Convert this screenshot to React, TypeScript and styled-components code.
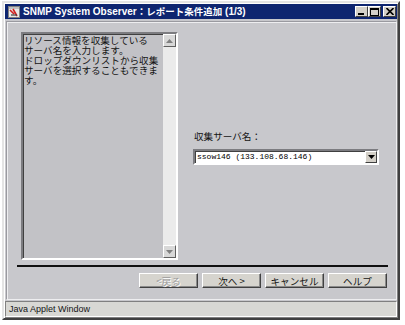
import React from "react";
import styled, { createGlobalStyle } from "styled-components";

const Global = createGlobalStyle`
  html, body { margin: 0; padding: 0; background: #ffffff; }
  body { font-family: "Noto Sans CJK JP", "Liberation Sans", sans-serif; }
  * { box-sizing: border-box; }
`;

const Root = styled.div`
  padding: 1px 0 0 2px;
`;

const Window = styled.div`
  width: 398px;
  height: 319px;
  background: #c8c8cc;
  border: 2px solid;
  border-color: #e4e4e4 #404040 #404040 #e4e4e4;
  box-shadow: inset 1px 1px 0 #ffffff, inset -1px -1px 0 #808080;
  padding: 1px;
  display: flex;
  flex-direction: column;
`;

const TitleBar = styled.div`
  height: 15px;
  background: #0e2570;
  display: flex;
  align-items: center;
  padding: 0 1px 0 3px;
`;

const Title = styled.div`
  flex: 1;
  color: #ffffff;
  font-family: "Liberation Sans", "Noto Sans CJK JP", sans-serif;
  font-weight: bold;
  font-size: 10px;
  line-height: 15px;
  margin-left: 3px;
  white-space: nowrap;
`;

const TitleJp = styled.span`
  font-family: "Noto Sans CJK JP", sans-serif;
  font-size: 9.5px;
`;

const Controls = styled.div`
  display: flex;
  align-items: center;
`;

const CtlButton = styled.div<{ $gap?: boolean }>`
  width: 13px;
  height: 11px;
  margin-left: ${(p) => (p.$gap ? "2px" : "0")};
  background: #d4d0c8;
  border: 1px solid;
  border-color: #ffffff #404040 #404040 #ffffff;
  display: flex;
  align-items: center;
  justify-content: center;
`;

const Panel = styled.div`
  flex: 1;
  margin: 3px 0 0 2px;
  border: 1px solid #eeeef0;
  box-shadow: -1px -1px 0 #9a9aa0;
  padding: 9px 8px 0 9px;
  display: flex;
  flex-direction: column;
`;

const Body = styled.div`
  display: flex;
  padding-left: 4px;
`;

const TextArea = styled.div`
  width: 157px;
  height: 228px;
  border: 2px solid;
  border-color: #7c7c80 #ffffff #ffffff #7c7c80;
  box-shadow: inset 1px 1px 0 #404040;
  background: #c2c2c6;
  display: flex;
`;

const Message = styled.div`
  flex: 1;
  padding: 1px 0 0 1px;
  font-size: 9.6px;
  line-height: 10px;
  color: #141414;
  white-space: pre-line;
`;

const ScrollBar = styled.div`
  width: 13px;
  background: #ebebeb;
  display: flex;
  flex-direction: column;
  justify-content: space-between;
`;

const ArrowButton = styled.div`
  width: 13px;
  height: 13px;
  background: #d8d8d8;
  border: 1px solid;
  border-color: #ffffff #606060 #606060 #ffffff;
  display: flex;
  align-items: center;
  justify-content: center;
`;

const FormColumn = styled.div`
  margin-left: 15px;
  width: 186px;
  align-self: center;
  display: flex;
  flex-direction: column;
  padding-top: 2px;
`;

const Label = styled.div`
  font-size: 9.6px;
  line-height: 12px;
  color: #141414;
  margin-left: 1px;
`;

const Combo = styled.div`
  margin-top: 7px;
  height: 16px;
  background: #ffffff;
  border: 2px solid;
  border-color: #7c7c80 #ffffff #ffffff #7c7c80;
  box-shadow: inset 1px 1px 0 #404040;
  display: flex;
  align-items: center;
`;

const ComboText = styled.div`
  flex: 1;
  padding-left: 2px;
  font-family: "Liberation Mono", monospace;
  font-size: 8px;
  color: #000000;
  white-space: nowrap;
`;

const DropButton = styled.div`
  width: 12px;
  height: 12px;
  background: #d4d0c8;
  border: 1px solid;
  border-color: #ffffff #404040 #404040 #ffffff;
  display: flex;
  align-items: center;
  justify-content: center;
`;

const Separator = styled.div`
  margin-top: 5px;
  height: 2px;
  background: #101010;
`;

const ButtonRow = styled.div`
  margin-top: 6px;
  display: flex;
  justify-content: flex-end;
  gap: 4px;
  padding-right: 1px;
`;

const Button = styled.div<{ $disabled?: boolean }>`
  width: 59px;
  height: 15px;
  background: #d6d4ce;
  border: 1px solid;
  border-color: #ffffff #404040 #404040 #ffffff;
  box-shadow: inset -1px -1px 0 #8a8a8a;
  display: flex;
  align-items: center;
  justify-content: center;
  font-size: 9.6px;
  color: ${(p) => (p.$disabled ? "#9c9c9c" : "#141414")};
  text-shadow: ${(p) => (p.$disabled ? "1px 1px 0 #ffffff" : "none")};
`;

const StatusBar = styled.div`
  margin-top: 1px;
  height: 16px;
  background: #d8d8d4;
  border: 1px solid;
  border-color: #808080 #ffffff #ffffff #808080;
  padding-left: 3px;
  display: flex;
  align-items: center;
  font-family: "Liberation Sans", sans-serif;
  font-size: 9px;
  color: #141414;
`;

const AppIcon = () => (
  <svg width="12" height="12" viewBox="0 0 12 12">
    <rect x="0.5" y="0.5" width="11" height="11" fill="#e8e8e8" stroke="#808080" />
    <rect x="1" y="1" width="10" height="2" fill="#c0c0c0" />
    <path d="M2 4 L6 8 M5 3 L9 10" stroke="#d02020" strokeWidth="1.6" />
    <path d="M3 9 h6" stroke="#404040" strokeWidth="1.2" />
  </svg>
);

const Triangle = ({ up, color = "#808080" }: { up?: boolean; color?: string }) => (
  <svg width="7" height="4" viewBox="0 0 7 4">
    <path d={up ? "M0 4 L3.5 0 L7 4 Z" : "M0 0 L7 0 L3.5 4 Z"} fill={color} />
  </svg>
);

export default function App() {
  return (
    <Root>
      <Global />
      <Window>
        <TitleBar>
          <AppIcon />
          <Title>
            SNMP System Observer<TitleJp>：レポート条件追加</TitleJp> (1/3)
          </Title>
          <Controls>
            <CtlButton>
              <svg width="7" height="7" viewBox="0 0 7 7">
                <rect x="0" y="5" width="6" height="2" fill="#000" />
              </svg>
            </CtlButton>
            <CtlButton>
              <svg width="9" height="8" viewBox="0 0 9 8">
                <rect x="0.5" y="0.5" width="8" height="7" fill="none" stroke="#000" />
                <rect x="0" y="0" width="9" height="2" fill="#000" />
              </svg>
            </CtlButton>
            <CtlButton $gap>
              <svg width="8" height="7" viewBox="0 0 8 7">
                <path d="M0.5 0 L7.5 7 M7.5 0 L0.5 7" stroke="#000" strokeWidth="1.6" />
              </svg>
            </CtlButton>
          </Controls>
        </TitleBar>
        <Panel>
          <Body>
            <TextArea>
              <Message>
                {"リソース情報を収集している\nサーバ名を入力します。\nドロップダウンリストから収集\nサーバを選択することもできま\nす。"}
              </Message>
              <ScrollBar>
                <ArrowButton>
                  <Triangle up />
                </ArrowButton>
                <ArrowButton>
                  <Triangle />
                </ArrowButton>
              </ScrollBar>
            </TextArea>
            <FormColumn>
              <Label>収集サーバ名：</Label>
              <Combo>
                <ComboText>ssow146 (133.108.68.146)</ComboText>
                <DropButton>
                  <Triangle color="#000" />
                </DropButton>
              </Combo>
            </FormColumn>
          </Body>
          <Separator />
          <ButtonRow>
            <Button $disabled>&lt;戻る</Button>
            <Button>次へ &gt;</Button>
            <Button>キャンセル</Button>
            <Button>ヘルプ</Button>
          </ButtonRow>
        </Panel>
        <StatusBar>Java Applet Window</StatusBar>
      </Window>
    </Root>
  );
}
